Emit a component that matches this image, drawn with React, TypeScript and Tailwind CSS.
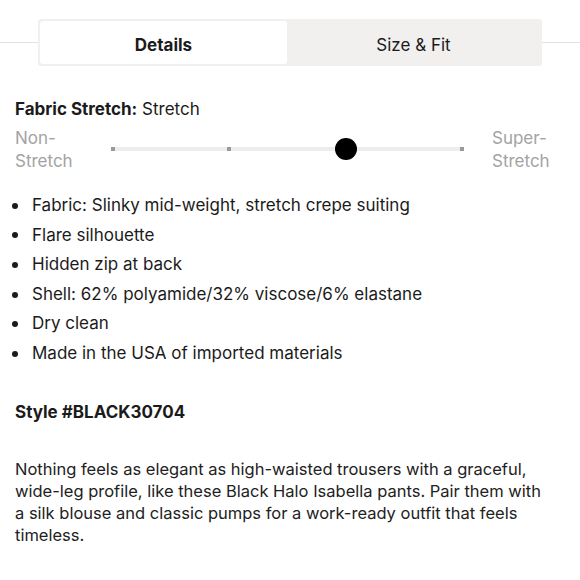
import React from 'react';

const bullets = [
  'Fabric: Slinky mid-weight, stretch crepe suiting',
  'Flare silhouette',
  'Hidden zip at back',
  'Shell: 62% polyamide/32% viscose/6% elastane',
  'Dry clean',
  'Made in the USA of imported materials',
];

const ticks = [0, 1, 2, 3];
const active = 2;

const StretchSlider: React.FC = () => (
  <div className="relative mb-[3px] flex h-[22px] w-[353px] items-center">
    <div className="h-[4px] w-full bg-[#ededed]" />
    <div className="absolute inset-0 flex items-center justify-between">
      {ticks.map((t) =>
        t === active ? (
          <span key={t} className="h-[22px] w-[22px] rounded-full bg-black -mx-[9px]" />
        ) : (
          <span key={t} className="h-[4px] w-[4px] bg-[#9a9a9a]" />
        )
      )}
    </div>
  </div>
);

export default function App() {
  return (
    <div className="min-h-[580px] w-[580px] bg-white text-[#1b1b1b] font-['Inter','Liberation_Sans',sans-serif]">
      <div className="flex items-center pt-[19px]">
        <div className="h-px flex-1 bg-[#e4e2df]" />
        <div className="flex h-[47px] w-[504px] rounded-[3px] bg-[#f1f0ee] p-[2px]">
          <button className="w-[247px] rounded-[3px] bg-white pt-[6px] text-[17px] font-bold">Details</button>
          <button className="flex-1 pt-[6px] text-[17px]">Size &amp; Fit</button>
        </div>
        <div className="h-px flex-1 bg-[#e4e2df]" />
      </div>

      <div className="px-[15px] pt-[31px]">
        <p className="text-[17px] leading-[24px]">
          <span className="font-bold">Fabric Stretch:</span> Stretch
        </p>
        <div className="mt-[6px] flex items-center">
          <div className="w-[96px] text-[17px] leading-[23px] text-[#a3a3a3]">
            Non-
            <br />
            Stretch
          </div>
          <StretchSlider />
          <div className="ml-[28px] text-[17px] leading-[23px] text-[#a3a3a3]">
            Super-
            <br />
            Stretch
          </div>
        </div>

        <ul className="mt-[18px] flex flex-col">
          {bullets.map((b) => (
            <li key={b} className="flex items-center text-[17px] leading-[29.6px]">
              <span className="ml-[-3px] mr-[14px] h-[6px] w-[6px] rounded-full bg-[#1b1b1b]" />
              {b}
            </li>
          ))}
        </ul>

        <p className="mt-[31px] text-[17px] font-bold leading-[24px]">Style #BLACK30704</p>

        <p className="mt-[34px] text-[16.5px] leading-[22px] text-[#222]">
          Nothing feels as elegant as high-waisted trousers with a graceful,
          <br />
          wide-leg profile, like these Black Halo Isabella pants. Pair them with
          <br />
          a silk blouse and classic pumps for a work-ready outfit that feels
          <br />
          timeless.
        </p>
      </div>
    </div>
  );
}
